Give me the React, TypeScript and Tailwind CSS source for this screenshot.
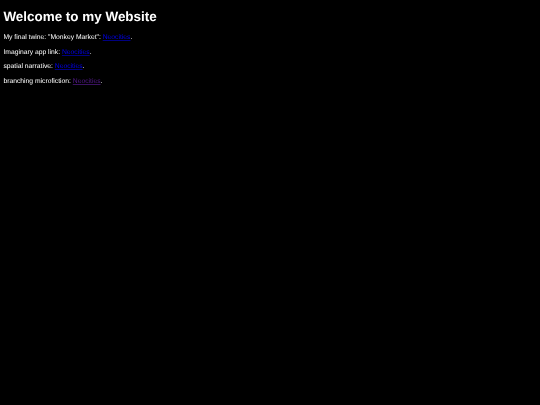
export default function App() {
  const rows = [
    { label: 'My final twine: "Monkey Market": ', color: 'text-[#0000ee] decoration-[#000080]' },
    { label: 'Imaginary app link: ', color: 'text-[#0000ee] decoration-[#000080]' },
    { label: 'spatial narrative: ', color: 'text-[#0000ee] decoration-[#000080]' },
    { label: 'branching microfiction: ', color: 'text-[#551a8b] decoration-[#3a1260]' },
  ];

  return (
    <div className="min-h-[405px] bg-black">
      <div className="px-[3.4px] pt-[9.4px] text-[6.76px] leading-[7.76px] text-white font-['Liberation_Sans',sans-serif] [text-rendering:geometricPrecision] blur-[0.3px]">
        <h1 className="mb-[9.6px] text-[13.44px] leading-[15.4px] font-bold">Welcome to my Website</h1>
        {rows.map((row) => (
          <p key={row.label} className="mb-[6.72px]">
            {row.label}
            <a href="#" className={`underline ${row.color}`}>Neocities</a>.
          </p>
        ))}
      </div>
    </div>
  );
}
